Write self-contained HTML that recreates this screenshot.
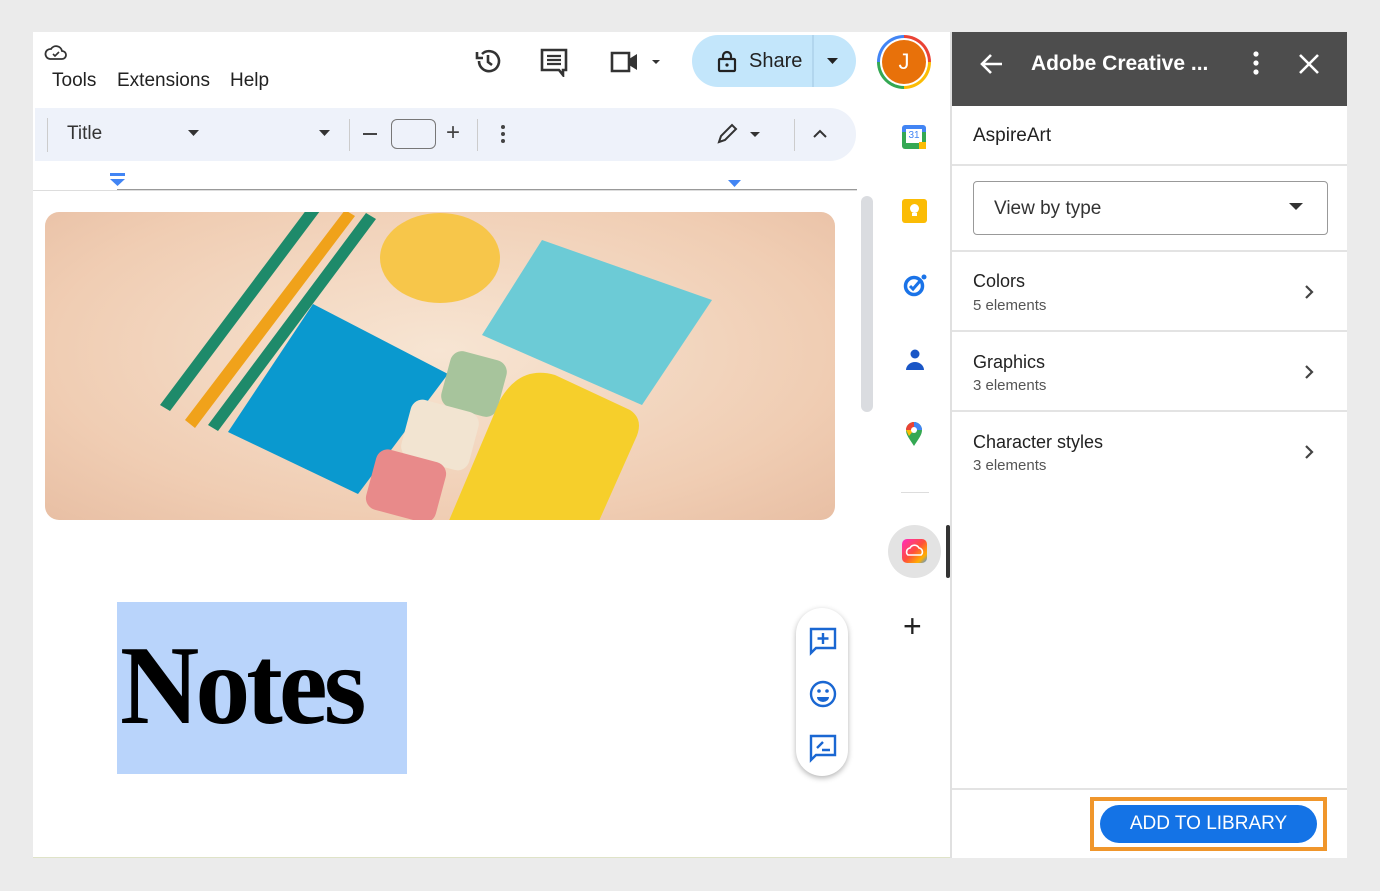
<!DOCTYPE html>
<html><head><meta charset="utf-8"><style>
*{box-sizing:border-box;margin:0;padding:0}
body{width:1380px;height:891px;background:#ebebeb;position:relative;overflow:hidden;font-family:"Liberation Sans",Arial,sans-serif;color:#222}
.a{position:absolute}
</style></head><body>
<div class="a" style="left:33px;top:32px;width:917px;height:826px;background:#fff;border-bottom:1px solid #dfe3c8"></div>
<svg class="a" style="left:43px;top:43px" width="26" height="20" viewBox="0 0 26 20"><path d="M7 16h12a4 4 0 0 0 0-8 6 6 0 0 0-11-2 5 5 0 0 0-1 10z" fill="none" stroke="#333" stroke-width="1.8"/><path d="M10 11l2 2 4-4" fill="none" stroke="#333" stroke-width="1.6"/></svg>
<div class="a" style="left:52px;top:70px;font-size:19px;color:#222">Tools</div>
<div class="a" style="left:117px;top:70px;font-size:19px;color:#222">Extensions</div>
<div class="a" style="left:230px;top:70px;font-size:19px;color:#222">Help</div>
<svg class="a" style="left:473px;top:46px" width="30" height="30" viewBox="0 0 30 30"><path d="M6 15a10 10 0 1 0 3-7" fill="none" stroke="#333" stroke-width="2.6"/><path d="M4 6v6h6" fill="none" stroke="#333" stroke-width="2.6"/><path d="M15 9v7l4 3" fill="none" stroke="#333" stroke-width="2.6"/></svg>
<svg class="a" style="left:539px;top:47px" width="30" height="30" viewBox="0 0 30 30"><path d="M3 3h24v20h-3v5l-4-5H3z" fill="none" stroke="#333" stroke-width="2.6"/><path d="M8 9h14M8 13h14M8 17h14" stroke="#333" stroke-width="2.2"/></svg>
<svg class="a" style="left:609px;top:48px" width="56" height="28" viewBox="0 0 56 28"><path d="M3 5h17v18H3z" fill="none" stroke="#333" stroke-width="2.6"/><path d="M20 11l8-5v16l-8-5z" fill="#333"/><path d="M43 12h8l-4 4z" fill="#333"/></svg>
<div class="a" style="left:692px;top:35px;width:164px;height:52px;border-radius:26px;background:#c3e6fb"></div>
<div class="a" style="left:812px;top:35px;width:2px;height:52px;background:#b2d6ee"></div>
<svg class="a" style="left:716px;top:49px" width="22" height="24" viewBox="0 0 22 24"><rect x="3" y="10" width="16" height="12" rx="1" fill="none" stroke="#222" stroke-width="2.2"/><path d="M7 10V7a4 4 0 0 1 8 0v3" fill="none" stroke="#222" stroke-width="2.2"/><circle cx="11" cy="16" r="1.6" fill="#222"/></svg>
<div class="a" style="left:749px;top:50px;font-size:20px;color:#222">Share</div>
<svg class="a" style="left:826px;top:56px" width="14" height="10"><path d="M1 2h11l-5.5 6z" fill="#222"/></svg>
<div class="a" style="left:877px;top:35px;width:54px;height:54px;border-radius:50%;background:conic-gradient(#ea4335 0 25%,#fbbc05 25% 50%,#34a853 50% 75%,#4285f4 75%)"></div>
<div class="a" style="left:880px;top:38px;width:48px;height:48px;border-radius:50%;background:#fff"></div>
<div class="a" style="left:882px;top:40px;width:44px;height:44px;border-radius:50%;background:#e8710a;color:#fff;font-size:22px;text-align:center;line-height:44px">J</div>
<div class="a" style="left:35px;top:108px;width:821px;height:53px;border-radius:0 26px 26px 0;background:#eef2fa"></div>
<div class="a" style="left:47px;top:118px;width:1px;height:34px;background:#ccc"></div>
<div class="a" style="left:67px;top:123px;font-size:19px;color:#333">Title</div>
<svg class="a" style="left:187px;top:128px" width="14" height="10"><path d="M1 2h11l-5.5 6z" fill="#333"/></svg>
<svg class="a" style="left:318px;top:128px" width="14" height="10"><path d="M1 2h11l-5.5 6z" fill="#333"/></svg>
<div class="a" style="left:349px;top:119px;width:1px;height:32px;background:#ccc"></div>
<div class="a" style="left:363px;top:133px;width:14px;height:2px;background:#444"></div>
<div class="a" style="left:391px;top:119px;width:45px;height:30px;border:1.5px solid #777;border-radius:6px"></div>
<div class="a" style="left:446px;top:119px;font-size:24px;color:#444">+</div>
<div class="a" style="left:477px;top:119px;width:1px;height:32px;background:#ccc"></div>
<svg class="a" style="left:498px;top:124px" width="10" height="22"><circle cx="5" cy="3" r="2" fill="#444"/><circle cx="5" cy="10" r="2" fill="#444"/><circle cx="5" cy="17" r="2" fill="#444"/></svg>
<svg class="a" style="left:716px;top:122px" width="48" height="24"><path d="M3 20l2-6 11-11 4 4-11 11z" fill="none" stroke="#333" stroke-width="2"/><path d="M34 10h10l-5 5z" fill="#333"/></svg>
<div class="a" style="left:794px;top:119px;width:1px;height:32px;background:#ccc"></div>
<svg class="a" style="left:812px;top:128px" width="16" height="12"><path d="M2 9l6-6 6 6" fill="none" stroke="#333" stroke-width="2"/></svg>
<div class="a" style="left:110px;top:173px;width:15px;height:3px;background:#4285f4"></div>
<svg class="a" style="left:109px;top:178px" width="17" height="10"><path d="M1 1h15l-7.5 7z" fill="#4285f4"/></svg>
<svg class="a" style="left:727px;top:179px" width="15" height="10"><path d="M1 1h13l-6.5 7z" fill="#4285f4"/></svg>
<div class="a" style="left:117px;top:189px;width:740px;height:1px;background:#999"></div>
<div class="a" style="left:33px;top:190px;width:824px;height:1px;background:#ddd"></div>
<div class="a" style="left:861px;top:196px;width:12px;height:216px;border-radius:6px;background:#dadce0"></div>
<div class="a" style="left:45px;top:212px;width:790px;height:308px;border-radius:14px;overflow:hidden;background:radial-gradient(ellipse at 50% 45%,#f7e5d3,#f0cdb3 70%,#e8bfa4)">
<svg width="790" height="308" viewBox="45 212 790 308">
<path d="M160 405l150-200 10 6-150 200z" fill="#1e8a6a"/>
<path d="M185 420l160-210 10 6-160 212z" fill="#f0a21a"/>
<path d="M208 425l158-212 10 6-158 212z" fill="#1e8a6a"/>
<ellipse cx="440" cy="258" rx="60" ry="45" fill="#f7c64a"/>
<path d="M228 432l85-128 135 70-90 120z" fill="#0a99cf"/>
<path d="M482 335l60-95 170 60-70 105z" fill="#6ccbd6"/>
<rect x="445" y="355" width="58" height="58" rx="12" fill="#a7c49c" transform="rotate(15 474 384)"/>
<rect x="405" y="405" width="70" height="60" rx="12" fill="#f2e4d1" transform="rotate(15 440 435)"/>
<rect x="370" y="455" width="72" height="62" rx="12" fill="#e88a8a" transform="rotate(15 406 486)"/>
<path d="M500 400q20-35 55-25l75 35q15 10 5 30l-40 90h-150z" fill="#f6cf2b"/>
</svg></div>
<div class="a" style="left:117px;top:602px;width:290px;height:172px;background:#b9d4fb"></div>
<div class="a" style="left:120px;top:622px;font-family:'Liberation Serif',serif;font-weight:bold;font-size:112px;color:#000;letter-spacing:-4px;transform:scaleX(0.98);transform-origin:left">Notes</div>
<div class="a" style="left:796px;top:608px;width:52px;height:168px;border-radius:26px;background:#fff;box-shadow:0 2px 6px rgba(0,0,0,.3)"></div>
<svg class="a" style="left:808px;top:626px" width="30" height="140" viewBox="0 0 30 140"><g fill="none" stroke="#1a67d2" stroke-width="2.4"><path d="M3 3h24v19H8l-5 5z"/><path d="M15 7v11M9.5 12.5h11"/><circle cx="15" cy="68" r="12"/><path d="M3 110h24v19H8l-5 5z"/><path d="M9 122l6-6M14 124h8"/></g><circle cx="11" cy="65" r="1.8" fill="#1a67d2"/><circle cx="19" cy="65" r="1.8" fill="#1a67d2"/><path d="M9 71h12a6 5 0 0 1-12 0z" fill="#1a67d2"/></svg>
<div class="a" style="left:902px;top:125px;width:24px;height:24px;border-radius:3px;background:linear-gradient(#4285f4,#4285f4) top/100% 7px no-repeat,#34a853"></div>
<div class="a" style="left:906px;top:129px;width:16px;height:14px;background:#fff;font-size:10px;color:#4285f4;text-align:center;line-height:14px">31</div>
<div class="a" style="left:919px;top:142px;width:7px;height:7px;background:#fbbc05"></div>
<div class="a" style="left:902px;top:199px;width:25px;height:24px;border-radius:3px;background:#fbbc05"></div>
<div class="a" style="left:910px;top:204px;width:9px;height:9px;border-radius:50%;background:#fff"></div>
<div class="a" style="left:912px;top:213px;width:5px;height:3px;background:#fff"></div>
<svg class="a" style="left:902px;top:272px" width="26" height="26"><circle cx="12" cy="14" r="8.5" fill="none" stroke="#1a73e8" stroke-width="3.5"/><path d="M8 14l3 3 7-8" fill="none" stroke="#1a73e8" stroke-width="3"/><circle cx="22" cy="5" r="2.5" fill="#1a73e8"/></svg>
<svg class="a" style="left:904px;top:348px" width="22" height="24"><circle cx="11" cy="6" r="4.5" fill="#1a56c6"/><path d="M2 22a9 8 0 0 1 18 0z" fill="#1a56c6"/></svg>
<svg class="a" style="left:904px;top:421px" width="20" height="26" viewBox="0 0 20 26"><path d="M10 25C5 17 2 14 2 9a8 8 0 0 1 16 0c0 5-3 8-8 16z" fill="#34a853"/><path d="M2 9a8 8 0 0 1 8-8v8z" fill="#ea4335"/><path d="M10 1a8 8 0 0 1 8 8h-8z" fill="#4285f4"/><path d="M2 9h8l-5 6z" fill="#fbbc05"/><circle cx="10" cy="9" r="3" fill="#fff"/></svg>
<div class="a" style="left:901px;top:492px;width:28px;height:1px;background:#ddd"></div>
<div class="a" style="left:888px;top:525px;width:53px;height:53px;border-radius:50%;background:#e3e3e3"></div>
<div class="a" style="left:902px;top:539px;width:25px;height:24px;border-radius:5px;background:linear-gradient(135deg,#ff2bc2,#ff4f3a 50%,#ffb000 80%,#3c8cff)"></div>
<svg class="a" style="left:904px;top:543px" width="21" height="16"><path d="M4 12a4 4 0 0 1 2-7 5 5 0 0 1 9 0 4 4 0 0 1 2 7z" fill="none" stroke="#fff" stroke-width="1.6"/></svg>
<div class="a" style="left:946px;top:525px;width:4px;height:53px;border-radius:2px;background:#333"></div>
<div class="a" style="left:903px;top:608px;font-size:32px;color:#222;font-weight:300">+</div>
<div class="a" style="left:950px;top:32px;width:2px;height:826px;background:#e0e0e0"></div>
<div class="a" style="left:952px;top:32px;width:395px;height:826px;background:#fff"></div>
<div class="a" style="left:952px;top:32px;width:395px;height:74px;background:#4d4d4d"></div>
<svg class="a" style="left:979px;top:52px" width="26" height="24"><path d="M23 12H4M12 3l-9 9 9 9" fill="none" stroke="#fff" stroke-width="2.6"/></svg>
<div class="a" style="left:1031px;top:52px;font-size:21px;font-weight:bold;color:#fff">Adobe Creative ...</div>
<svg class="a" style="left:1250px;top:50px" width="12" height="28"><circle cx="6" cy="4" r="2.6" fill="#fff"/><circle cx="6" cy="13" r="2.6" fill="#fff"/><circle cx="6" cy="22" r="2.6" fill="#fff"/></svg>
<svg class="a" style="left:1298px;top:53px" width="22" height="22"><path d="M2 2l18 18M20 2L2 20" stroke="#fff" stroke-width="2.6"/></svg>
<div class="a" style="left:973px;top:125px;font-size:19px;color:#222">AspireArt</div>
<div class="a" style="left:952px;top:164px;width:395px;height:2px;background:#e3e3e3"></div>
<div class="a" style="left:973px;top:181px;width:355px;height:54px;border:1.5px solid #999;border-radius:4px"></div>
<div class="a" style="left:994px;top:198px;font-size:19px;color:#333">View by type</div>
<svg class="a" style="left:1288px;top:202px" width="16" height="10"><path d="M1 1h14l-7 7z" fill="#333"/></svg>
<div class="a" style="left:952px;top:250px;width:395px;height:2px;background:#e3e3e3"></div>
<div class="a" style="left:973px;top:271px;font-size:18px;color:#222">Colors</div>
<div class="a" style="left:973px;top:297px;font-size:15px;color:#555">5 elements</div>
<div class="a" style="left:952px;top:330px;width:395px;height:2px;background:#e3e3e3"></div>
<div class="a" style="left:973px;top:352px;font-size:18px;color:#222">Graphics</div>
<div class="a" style="left:973px;top:377px;font-size:15px;color:#555">3 elements</div>
<div class="a" style="left:952px;top:410px;width:395px;height:2px;background:#e3e3e3"></div>
<div class="a" style="left:973px;top:432px;font-size:18px;color:#222">Character styles</div>
<div class="a" style="left:973px;top:457px;font-size:15px;color:#555">3 elements</div>
<svg class="a" style="left:1303px;top:284px" width="12" height="190"><g fill="none" stroke="#444" stroke-width="2.2"><path d="M3 2l6 6-6 6"/><path d="M3 82l6 6-6 6"/><path d="M3 162l6 6-6 6"/></g></svg>
<div class="a" style="left:952px;top:788px;width:395px;height:2px;background:#e3e3e3"></div>
<div class="a" style="left:1090px;top:797px;width:237px;height:54px;border:4px solid #f0962b"></div>
<div class="a" style="left:1100px;top:805px;width:217px;height:38px;border-radius:19px;background:#1473e6;color:#fff;font-size:19px;text-align:center;line-height:38px">ADD TO LIBRARY</div>
</body></html>
